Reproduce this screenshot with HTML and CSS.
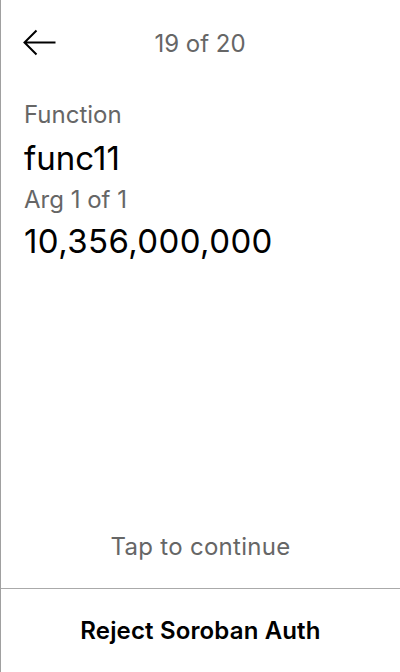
FILE: index.html
```html
<!DOCTYPE html>
<html>
<head>
<meta charset="utf-8">
<link rel="stylesheet" href="styles.css">
</head>
<body>
<div class="screen">
  <div class="header">
    <svg class="back" width="34" height="28" viewBox="0 0 34 28">
      <path d="M32.5 13.5H1.5M13.5 1.5L1.5 13.5L13.5 25.5" fill="none" stroke="#000" stroke-width="2"/>
    </svg>
    <div class="count">19 of 20</div>
  </div>
  <div class="content">
    <div class="label">Function</div>
    <div class="value func">func11</div>
    <div class="label arg">Arg 1 of 1</div>
    <div class="value num">10,356,000,000</div>
  </div>
  <div class="tap">Tap to continue</div>
  <div class="footer">Reject Soroban Auth</div>
</div>
</body>
</html>
```
FILE: styles.css
```css
html, body {
  margin: 0;
  padding: 0;
  background: #fff;
}
body {
  font-family: Inter, "Noto Sans", sans-serif;
}
.screen {
  width: 400px;
  height: 672px;
  box-sizing: border-box;
  border-left: 1px solid #a0a0a0;
  display: flex;
  flex-direction: column;
}
.header {
  position: relative;
  height: 88px;
  display: flex;
  align-items: center;
  justify-content: center;
}
.back {
  position: absolute;
  left: 22px;
  top: 29px;
}
.count {
  font-size: 24px;
  color: #666;
  line-height: 24px;
  margin-left: -1px;
}
.content {
  padding: 12px 23px 0;
  display: flex;
  flex-direction: column;
}
.label {
  font-size: 24px;
  color: #666;
  line-height: 30px;
}
.value {
  font-size: 33px;
  color: #000;
  line-height: 40px;
}
.func {
  margin-top: 8px;
}
.arg {
  margin-top: 7px;
}
.num {
  margin-top: 6px;
  letter-spacing: 0.4px;
}
.tap {
  margin-top: auto;
  text-align: center;
  font-size: 24px;
  letter-spacing: 0.3px;
  color: #666;
  line-height: 28px;
  padding-bottom: 27px;
}
.footer {
  border-top: 1px solid #aaa;
  height: 83px;
  display: flex;
  align-items: center;
  justify-content: center;
  font-size: 24px;
  letter-spacing: 0.15px;
  font-weight: 600;
  color: #000;
}
```
